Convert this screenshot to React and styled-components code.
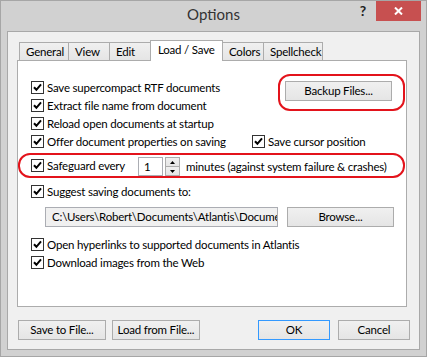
import React from 'react';
import styled, { createGlobalStyle } from 'styled-components';

const GlobalStyle = createGlobalStyle`
  html, body {
    margin: 0;
    padding: 0;
    background: #ffffff;
  }
  body {
    font-family: Lato, "Noto Sans", sans-serif;
    font-size: 11.5px;
    letter-spacing: -0.2px;
    color: #000;
  }
  * {
    box-sizing: border-box;
  }
`;

const Window = styled.div`
  width: 427px;
  height: 357px;
  border: 1px solid #a6a6a6;
  background: #d1d1d1;
  display: flex;
  flex-direction: column;
`;

const TitleBar = styled.div`
  height: 30px;
  flex: none;
  display: grid;
  grid-template-columns: 1fr auto 1fr;
`;

const Title = styled.div`
  grid-column: 2;
  font-size: 15px;
  letter-spacing: 0;
  line-height: 26px;
  color: #333;
`;

const Controls = styled.div`
  grid-column: 3;
  display: flex;
  justify-content: flex-end;
  align-items: flex-start;
  padding-right: 5px;
`;

const Help = styled.span`
  font-size: 14px;
  font-weight: 700;
  line-height: 20px;
  color: #222;
  margin-right: 10px;
`;

const Close = styled.div`
  width: 45px;
  height: 20px;
  background: #c75050;
  display: flex;
  align-items: center;
  justify-content: center;
`;

const Client = styled.div`
  margin: 0 6px;
  height: 319px;
  flex: none;
  border: 1px solid #a8a8a8;
  background: #f0f0f0;
  padding: 8px 12px 0 9px;
  display: flex;
  flex-direction: column;
`;

const TabRow = styled.div`
  display: flex;
  align-items: flex-end;
  height: 20px;
  flex: none;
  padding-left: 2px;
`;

const Tab = styled.div`
  position: relative;
  z-index: ${p => (p.$active ? 1 : 0)};
  width: ${p => p.$w}px;
  height: ${p => (p.$active ? 21 : 18)}px;
  margin-left: -1px;
  margin-bottom: ${p => (p.$active ? -1 : 0)}px;
  border: 1px solid #acacac;
  border-bottom: none;
  background: ${p => (p.$active ? '#ffffff' : 'linear-gradient(#f0f0f0, #e5e5e5)')};
  padding-left: ${p => (p.$active ? 7 : 6)}px;
  line-height: 17px;
  white-space: nowrap;

  &:first-child {
    margin-left: 0;
  }
`;

const Panel = styled.div`
  height: 247px;
  flex: none;
  background: #ffffff;
  border: 1px solid #acacac;
  padding-top: 17px;
  display: flex;
  flex-direction: column;
`;

const TopGrid = styled.div`
  display: grid;
  grid-template-columns: 221px 1fr;
  grid-template-rows: repeat(4, 18px);
  padding-left: 13px;
`;

const Rows = styled.div`
  display: flex;
  flex-direction: column;
  padding-left: 13px;
  margin-top: ${p => p.$mt || 0}px;
`;

const Check = styled.label`
  display: flex;
  align-items: center;
  gap: 3px;
  height: 18px;
  white-space: nowrap;
  flex: none;
  width: ${p => (p.$w ? `${p.$w}px` : 'auto')};
  margin-top: ${p => p.$mt || 0}px;
  grid-column: ${p => p.$col || 'auto'};
  grid-row: ${p => p.$row || 'auto'};
`;

const Box = styled.span`
  width: 13px;
  height: 13px;
  flex: none;
  border: 1px solid #333;
  background: #fff;
  display: flex;
`;

const Ring = styled.div`
  border: 2px solid #e3131b;
  border-radius: 12px;
`;

const BackupRing = styled(Ring)`
  grid-column: 2;
  grid-row: 1 / span 2;
  align-self: start;
  margin: -4px 0 0 26px;
  width: 127px;
  height: 37px;
  padding: 5px 0 0 5px;
`;

const SafeRing = styled(Ring)`
  margin: 3px 1px 0 0;
  height: 25px;
  padding: 0 0 0 11px;
  display: flex;
  align-items: center;
`;

const Button = styled.button`
  width: ${p => p.$w}px;
  height: 20px;
  flex: none;
  padding: 0;
  border: 1px solid ${p => (p.$default ? '#3399ff' : '#acacac')};
  background: linear-gradient(#f0f0f0, #e5e5e5);
  font: inherit;
  letter-spacing: inherit;
  color: #000;
  line-height: 18px;
  margin-left: ${p => (p.$ml === 'auto' ? 'auto' : `${p.$ml || 0}px`)};
`;

const NumInput = styled.div`
  width: 25px;
  height: 19px;
  margin-top: 2px;
  border: 1px solid #abadb3;
  background: #fff;
  padding-left: 5px;
  line-height: 17px;
`;

const Spinner = styled.div`
  width: 15px;
  height: 19px;
  margin: 2px 0 0 2px;
  display: flex;
  flex-direction: column;
`;

const SpinButton = styled.div`
  flex: 1;
  border: 1px solid #acacac;
  background: linear-gradient(#f0f0f0, #e5e5e5);
  display: flex;
  align-items: center;
  justify-content: center;

  & + & {
    border-top: none;
  }
`;

const Caption = styled.span`
  margin: 2px 0 0 6px;
  white-space: nowrap;
`;

const PathRow = styled.div`
  display: flex;
  margin: 7px 0 0 14px;
`;

const PathBox = styled.div`
  width: 233px;
  height: 20px;
  border: 1px solid #abadb3;
  background: #f0f0f0;
  padding-left: 6px;
  line-height: 18px;
  overflow: hidden;
  white-space: nowrap;
`;

const Footer = styled.div`
  display: flex;
  margin: 13px -3px 0 1px;
`;

const CheckBox = ({ label, w, mt, col, row }) => (
  <Check $w={w} $mt={mt} $col={col} $row={row}>
    <Box>
      <svg width="11" height="11" viewBox="0 0 11 11">
        <path d="M2 5.2 L4.4 7.8 L9 2.4" fill="none" stroke="#000" strokeWidth="2" />
      </svg>
    </Box>
    {label}
  </Check>
);

const tabs = [
  { name: 'General', w: 50 },
  { name: 'View', w: 42 },
  { name: 'Edit', w: 42 },
  { name: 'Load / Save', w: 73, active: true },
  { name: 'Colors', w: 42 },
  { name: 'Spellcheck', w: 60 },
];

const App = () => (
  <>
    <GlobalStyle />
    <Window>
      <TitleBar>
        <Title>Options</Title>
        <Controls>
          <Help>?</Help>
          <Close>
            <svg width="9" height="8" viewBox="0 0 9 8">
              <path d="M1 0.5 L8 7.5 M8 0.5 L1 7.5" stroke="#fff" strokeWidth="2" />
            </svg>
          </Close>
        </Controls>
      </TitleBar>

      <Client>
        <TabRow>
          {tabs.map(t => (
            <Tab key={t.name} $w={t.w} $active={t.active}>{t.name}</Tab>
          ))}
        </TabRow>

        <Panel>
          <TopGrid>
            <CheckBox label="Save supercompact RTF documents" col={1} row={1} />
            <BackupRing>
              <Button $w={107}>Backup Files...</Button>
            </BackupRing>
            <CheckBox label="Extract file name from document" col={1} row={2} />
            <CheckBox label="Reload open documents at startup" col={1} row={3} />
            <CheckBox label="Offer document properties on saving" col={1} row={4} />
            <CheckBox label="Save cursor position" col={2} row={4} />
          </TopGrid>

          <SafeRing>
            <CheckBox label="Safeguard every" w={107} />
            <NumInput>1</NumInput>
            <Spinner>
              <SpinButton>
                <svg width="5" height="3" viewBox="0 0 5 3"><path d="M0 3 L2.5 0 L5 3 Z" fill="#000" /></svg>
              </SpinButton>
              <SpinButton>
                <svg width="5" height="3" viewBox="0 0 5 3"><path d="M0 0 L5 0 L2.5 3 Z" fill="#000" /></svg>
              </SpinButton>
            </Spinner>
            <Caption>minutes (against system failure &amp; crashes)</Caption>
          </SafeRing>

          <Rows $mt={4}>
            <CheckBox label="Suggest saving documents to:" />
            <PathRow>
              <PathBox>C:\Users\Robert\Documents\Atlantis\Documents</PathBox>
              <Button $w={107} $ml={9}>Browse...</Button>
            </PathRow>
            <CheckBox label="Open hyperlinks to supported documents in Atlantis" mt={8} />
            <CheckBox label="Download images from the Web" />
          </Rows>
        </Panel>

        <Footer>
          <Button $w={88}>Save to File...</Button>
          <Button $w={88} $ml={6}>Load from File...</Button>
          <Button $w={72} $ml="auto" $default>OK</Button>
          <Button $w={72} $ml={8}>Cancel</Button>
        </Footer>
      </Client>
    </Window>
  </>
);

export default App;
